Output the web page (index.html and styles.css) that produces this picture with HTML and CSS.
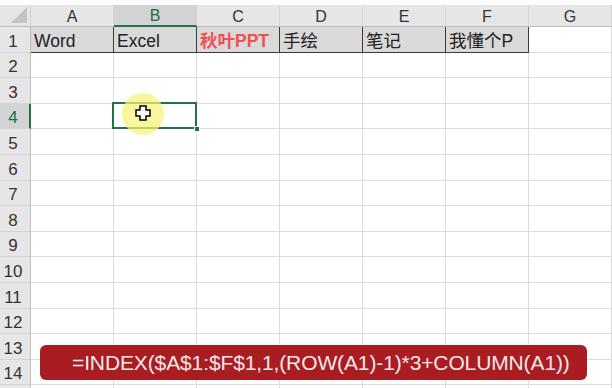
FILE: index.html
```html
<!DOCTYPE html>
<html>
<head>
<meta charset="utf-8">
<link rel="stylesheet" href="styles.css">
</head>
<body>
<div class="sheet">
  <div class="grid">
    <div class="corner"><span class="tri"></span></div>
    <div class="ch">A</div>
    <div class="ch ch-sel">B</div>
    <div class="ch">C</div>
    <div class="ch">D</div>
    <div class="ch">E</div>
    <div class="ch">F</div>
    <div class="ch">G</div>

    <div class="rh">1</div>
    <div class="c h1">Word</div>
    <div class="c h1">Excel</div>
    <div class="c h1 red">秋叶PPT</div>
    <div class="c h1">手绘</div>
    <div class="c h1">笔记</div>
    <div class="c h1">我懂个P</div>
    <div class="c"></div>

    <div class="rh">2</div><div class="c"></div><div class="c"></div><div class="c"></div><div class="c"></div><div class="c"></div><div class="c"></div><div class="c"></div>
    <div class="rh">3</div><div class="c"></div><div class="c"></div><div class="c"></div><div class="c"></div><div class="c"></div><div class="c"></div><div class="c"></div>
    <div class="rh rh-sel">4</div><div class="c"></div><div class="c sel"><span class="handle"></span></div><div class="c"></div><div class="c"></div><div class="c"></div><div class="c"></div><div class="c"></div>
    <div class="rh">5</div><div class="c"></div><div class="c"></div><div class="c"></div><div class="c"></div><div class="c"></div><div class="c"></div><div class="c"></div>
    <div class="rh">6</div><div class="c"></div><div class="c"></div><div class="c"></div><div class="c"></div><div class="c"></div><div class="c"></div><div class="c"></div>
    <div class="rh">7</div><div class="c"></div><div class="c"></div><div class="c"></div><div class="c"></div><div class="c"></div><div class="c"></div><div class="c"></div>
    <div class="rh">8</div><div class="c"></div><div class="c"></div><div class="c"></div><div class="c"></div><div class="c"></div><div class="c"></div><div class="c"></div>
    <div class="rh">9</div><div class="c"></div><div class="c"></div><div class="c"></div><div class="c"></div><div class="c"></div><div class="c"></div><div class="c"></div>
    <div class="rh">10</div><div class="c"></div><div class="c"></div><div class="c"></div><div class="c"></div><div class="c"></div><div class="c"></div><div class="c"></div>
    <div class="rh">11</div><div class="c"></div><div class="c"></div><div class="c"></div><div class="c"></div><div class="c"></div><div class="c"></div><div class="c"></div>
    <div class="rh">12</div><div class="c"></div><div class="c"></div><div class="c"></div><div class="c"></div><div class="c"></div><div class="c"></div><div class="c"></div>
    <div class="rh">13</div><div class="c"></div><div class="c"></div><div class="c"></div><div class="c"></div><div class="c"></div><div class="c"></div><div class="c"></div>
    <div class="rh">14</div><div class="c"></div><div class="c"></div><div class="c"></div><div class="c"></div><div class="c"></div><div class="c"></div><div class="c"></div>
    <div class="rh"></div><div class="c"></div><div class="c"></div><div class="c"></div><div class="c"></div><div class="c"></div><div class="c"></div><div class="c"></div>
  </div>

  <div class="spot"></div>
  <svg class="cursor" width="16" height="16" viewBox="0 0 16 16">
    <path d="M5 1h6v4h4v6h-4v4H5v-4H1V5h4z" fill="#fff" stroke="#000" stroke-width="1.5" stroke-linejoin="miter"/>
  </svg>

  <div class="formula">=INDEX($A$1:$F$1,1,(ROW(A1)-1)*3+COLUMN(A1))</div>
</div>
</body>
</html>
```

FILE: styles.css
```css
html, body {
  margin: 0;
  padding: 0;
  background: #fff;
  overflow: hidden;
}

.sheet {
  position: relative;
  width: 612px;
  height: 388px;
  padding-top: 5px;
  box-sizing: border-box;
  overflow: hidden;
  font-family: "Liberation Sans", "Noto Sans CJK SC", sans-serif;
  color: #222;
}

.grid {
  display: grid;
  grid-template-columns: 31px repeat(6, 83px) 1fr;
  grid-template-rows: 22px repeat(15, 25.6px);
}

.corner {
  position: relative;
  background: #e6e6e6;
  border-right: 1px solid #d0d0d0;
  border-bottom: 1px solid #bdbdbd;
  box-sizing: border-box;
}

.tri {
  position: absolute;
  right: 3px;
  bottom: 3px;
  width: 0;
  height: 0;
  border-left: 16px solid transparent;
  border-bottom: 16px solid #c4c4c4;
}

.ch {
  background: #e6e6e6;
  border-right: 1px solid #d4d4d4;
  border-bottom: 1px solid #bdbdbd;
  box-sizing: border-box;
  display: flex;
  align-items: flex-end;
  justify-content: center;
  font-size: 16px;
  line-height: 19px;
  color: #333;
}

.ch-sel {
  background: #d3d3d3;
  border-bottom: 2px solid #217346;
  color: #1e6b46;
  line-height: 18px;
}

.rh {
  background: #e6e6e6;
  border-right: 1px solid #bdbdbd;
  border-bottom: 1px solid #d4d4d4;
  box-sizing: border-box;
  display: flex;
  align-items: flex-end;
  justify-content: center;
  padding-right: 4px;
  font-size: 17px;
  line-height: 21px;
  color: #333;
}

.rh-sel {
  background: #d3d3d3;
  border-right: 2px solid #217346;
  padding-right: 3px;
  color: #1e6b46;
}

.c {
  border-right: 1px solid #dcdcdc;
  border-bottom: 1px solid #dcdcdc;
  box-sizing: border-box;
  display: flex;
  align-items: flex-end;
  padding-left: 3px;
  font-size: 17.5px;
  line-height: 22px;
  white-space: nowrap;
  overflow: hidden;
}

.h1 {
  background: #d9d9d9;
  border-right: 1px solid #3a3a3a;
  border-bottom: 1px solid #3a3a3a;
}

.red {
  color: #f0504f;
  font-weight: bold;
}

.sel {
  position: relative;
  overflow: visible;
  z-index: 2;
}

.sel::before {
  content: "";
  position: absolute;
  left: -2px;
  top: -2px;
  right: -1px;
  bottom: -1px;
  border: 2px solid #217346;
}

.handle {
  position: absolute;
  right: -4px;
  bottom: -4px;
  width: 6px;
  height: 6px;
  background: #217346;
  border: 1px solid #fff;
  box-sizing: border-box;
}

.spot {
  position: absolute;
  left: 122px;
  top: 93px;
  width: 42px;
  height: 42px;
  border-radius: 50%;
  background: rgba(247, 243, 120, 0.72);
  z-index: 3;
}

.cursor {
  position: absolute;
  left: 135px;
  top: 105px;
  z-index: 4;
}

.formula {
  position: absolute;
  left: 40px;
  top: 345px;
  width: 547px;
  height: 35px;
  box-sizing: border-box;
  padding-left: 32px;
  border-radius: 6px;
  background: #a91c21;
  color: #f4e8e8;
  font-family: "Liberation Sans", sans-serif;
  font-size: 21px;
  letter-spacing: -0.12px;
  line-height: 35px;
  white-space: nowrap;
  z-index: 5;
}
```
